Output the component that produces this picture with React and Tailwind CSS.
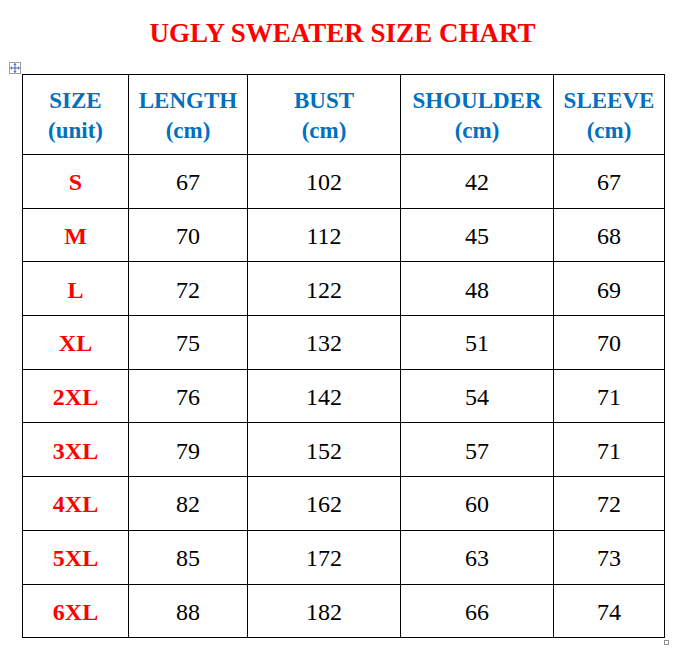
import React from 'react'

const rows = [
  ['S', 67, 102, 42, 67],
  ['M', 70, 112, 45, 68],
  ['L', 72, 122, 48, 69],
  ['XL', 75, 132, 51, 70],
  ['2XL', 76, 142, 54, 71],
  ['3XL', 79, 152, 57, 71],
  ['4XL', 82, 162, 60, 72],
  ['5XL', 85, 172, 63, 73],
  ['6XL', 88, 182, 66, 74],
]

const heads = [
  ['SIZE', '(unit)'],
  ['LENGTH', '(cm)'],
  ['BUST', '(cm)'],
  ['SHOULDER', '(cm)'],
  ['SLEEVE', '(cm)'],
]

function MoveHandle() {
  return (
    <div className="absolute -left-[13px] -top-[12px] w-[12px] h-[12px] border border-[#a0a0a0] bg-white flex items-center justify-center">
      <svg width="10" height="10" viewBox="0 0 10 10" fill="#3b62c9">
        <rect x="4.5" y="1" width="1" height="8" />
        <rect x="1" y="4.5" width="8" height="1" />
        <polygon points="5,0 3.3,1.8 6.7,1.8" />
        <polygon points="5,10 3.3,8.2 6.7,8.2" />
        <polygon points="0,5 1.8,3.3 1.8,6.7" />
        <polygon points="10,5 8.2,3.3 8.2,6.7" />
      </svg>
    </div>
  )
}

export default function App() {
  return (
    <div className="w-[681px] h-[661px] bg-white font-['Liberation_Serif',serif]">
      <h1 className="pt-[16px] h-[74px] pl-[4px] text-center text-[27px] leading-[34px] font-bold text-[#ff0000]">
        UGLY SWEATER SIZE CHART
      </h1>
      <div className="relative ml-[22px] w-[642px]">
        <MoveHandle />
        <table className="table-fixed border-collapse w-[642px]">
          <colgroup>
            <col className="w-[106px]" />
            <col className="w-[119px]" />
            <col className="w-[153px]" />
            <col className="w-[153px]" />
            <col className="w-[111px]" />
          </colgroup>
          <thead>
            <tr className="h-[80px]">
              {heads.map(([a, b]) => (
                <th key={a} className="border border-black p-0 pt-[2px] text-center align-middle text-[23px] leading-[30px] font-bold text-[#0070c0]">
                  <div>{a}</div>
                  <div>{b}</div>
                </th>
              ))}
            </tr>
          </thead>
          <tbody>
            {rows.map(r => (
              <tr key={r[0]} className="h-[53.7px]">
                <td className="border border-black p-0 pt-[2px] text-center text-[24px] font-bold text-[#ff0000]">{r[0]}</td>
                {r.slice(1).map((v, i) => (
                  <td key={i} className="border border-black p-0 pt-[2px] text-center text-[24px] text-black">{v}</td>
                ))}
              </tr>
            ))}
          </tbody>
        </table>
        <div className="absolute right-[-5px] bottom-[-7px] w-[5px] h-[5px] border border-[#909090] bg-white" />
      </div>
    </div>
  )
}
